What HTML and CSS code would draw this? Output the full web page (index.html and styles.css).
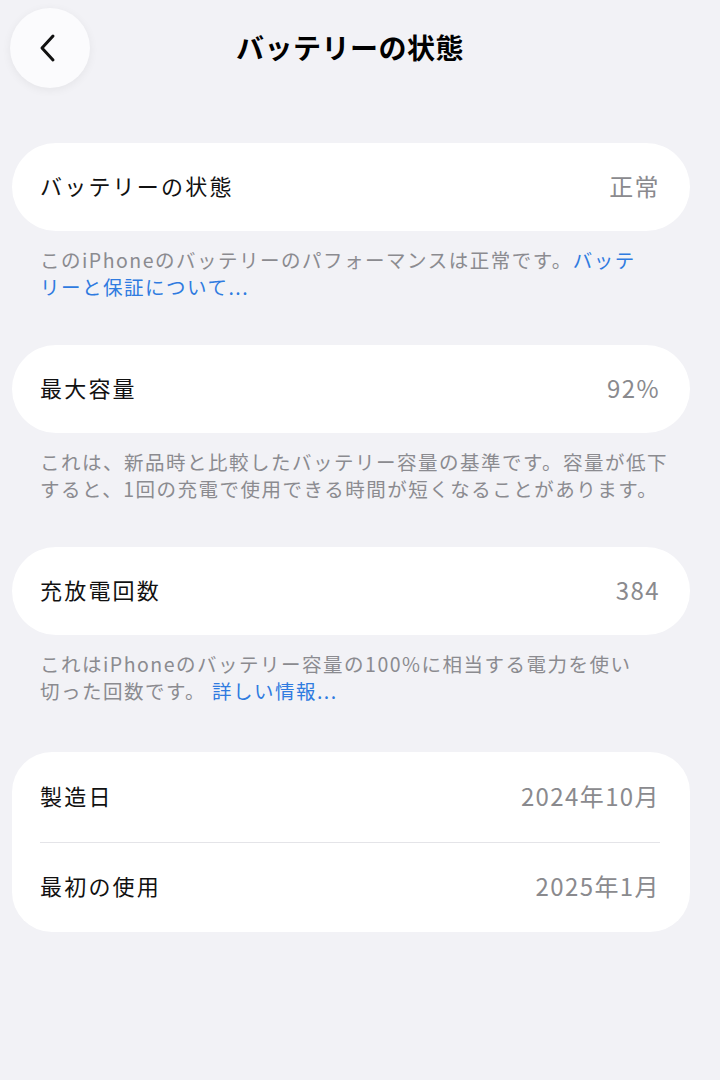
FILE: index.html
```html
<!DOCTYPE html>
<html lang="ja">
<head>
  <meta charset="UTF-8">
  <title>バッテリーの状態</title>
  <link rel="stylesheet" href="styles.css">
</head>
<body>
  <div class="screen">
    <header class="nav">
      <button class="back" aria-label="戻る">
        <svg width="20" height="30" viewBox="0 0 20 30">
          <path d="M15 3 L4 15 L15 27" fill="none" stroke="#111" stroke-width="3" stroke-linecap="round" stroke-linejoin="round"/>
        </svg>
      </button>
      <h1>バッテリーの状態</h1>
    </header>

    <section class="group">
      <div class="card">
        <div class="row">
          <span class="label">バッテリーの状態</span>
          <span class="value">正常</span>
        </div>
      </div>
      <p class="note">このiPhoneのバッテリーのパフォーマンスは正常です。<a href="#">バッテ<br>リーと保証について...</a></p>
    </section>

    <section class="group">
      <div class="card">
        <div class="row">
          <span class="label">最大容量</span>
          <span class="value">92%</span>
        </div>
      </div>
      <p class="note">これは、新品時と比較したバッテリー容量の基準です。容量が低下<br>すると、1回の充電で使用できる時間が短くなることがあります。</p>
    </section>

    <section class="group">
      <div class="card">
        <div class="row">
          <span class="label">充放電回数</span>
          <span class="value">384</span>
        </div>
      </div>
      <p class="note">これはiPhoneのバッテリー容量の100%に相当する電力を使い<br>切った回数です。 <a href="#">詳しい情報...</a></p>
    </section>

    <section class="group group-dates">
      <div class="card card-list">
        <div class="row">
          <span class="label">製造日</span>
          <span class="value">2024年10月</span>
        </div>
        <div class="row">
          <span class="label">最初の使用</span>
          <span class="value">2025年1月</span>
        </div>
      </div>
    </section>
  </div>
</body>
</html>
```

FILE: styles.css
```css
body {
  margin: 0;
  background-color: #f2f2f6;
  font-family: "Noto Sans CJK JP", "Noto Sans", sans-serif;
  color: #111;
}
.screen {
  width: 678px;
  padding: 8px 0 0 12px;
  min-height: 1072px;
}
.nav {
  display: grid;
  grid-template-columns: 80px 1fr 80px;
  align-items: center;
  height: 80px;
  margin-left: -2px;
}
.back {
  width: 80px;
  height: 80px;
  border: none;
  border-radius: 50%;
  background-color: #fbfbfd;
  box-shadow: 0 2px 10px rgba(0, 0, 0, 0.06);
  display: flex;
  align-items: center;
  justify-content: center;
  padding: 0 4px 0 0;
  cursor: pointer;
}
.nav h1 {
  margin: 0 0 2px;
  text-align: center;
  font-size: 28px;
  font-weight: bold;
  letter-spacing: 0.5px;
  color: #000;
}
.group {
  margin-top: 45px;
}
.group:first-of-type {
  margin-top: 55px;
}
.group-dates {
  margin-top: 48px;
}
.card {
  background-color: #ffffff;
  border-radius: 44px;
}
.card-list {
  border-radius: 40px;
}
.row {
  display: flex;
  justify-content: space-between;
  align-items: center;
  height: 88px;
  padding: 0 30px 4px 28px;
  box-sizing: border-box;
}
.card-list .row {
  height: 90px;
  position: relative;
}
.card-list .row + .row::before {
  content: "";
  position: absolute;
  top: 0;
  left: 28px;
  right: 30px;
  border-top: 1px solid #e4e4e8;
}
.label {
  font-size: 22px;
  letter-spacing: 2.2px;
  color: #111;
}
.value {
  font-size: 24px;
  letter-spacing: 1.4px;
  color: #8a8a8e;
}
.note {
  margin: 15px 0 0;
  padding-left: 28px;
  font-size: 19.5px;
  line-height: 27px;
  letter-spacing: 1.5px;
  color: #8b8b90;
}
.note a {
  color: #2f7be0;
  text-decoration: none;
}
```
